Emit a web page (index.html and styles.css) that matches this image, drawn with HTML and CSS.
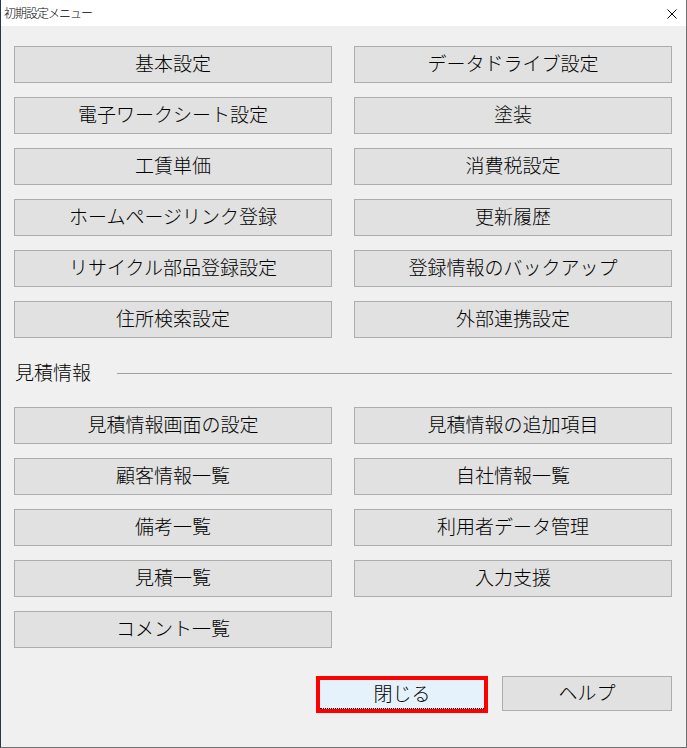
FILE: index.html
```html
<!DOCTYPE html>
<html lang="ja">
<head>
    <meta charset="UTF-8">
    <title>初期設定メニュー</title>
    <link rel="stylesheet" href="styles.css">
</head>
<body>

<div class="window">
    <div class="titlebar">
        <span class="title">初期設定メニュー</span>
        <svg class="close" width="10" height="10" viewBox="0 0 10 10">
            <path d="M0.5 0.5 L9.5 9.5 M9.5 0.5 L0.5 9.5" stroke="#000" stroke-width="1"/>
        </svg>
    </div>

    <div class="content">
        <div class="grid">
            <button>基本設定</button>
            <button>データドライブ設定</button>
            <button>電子ワークシート設定</button>
            <button>塗装</button>
            <button>工賃単価</button>
            <button>消費税設定</button>
            <button>ホームページリンク登録</button>
            <button>更新履歴</button>
            <button>リサイクル部品登録設定</button>
            <button>登録情報のバックアップ</button>
            <button>住所検索設定</button>
            <button>外部連携設定</button>
        </div>

        <div class="section">
            <span class="section-label">見積情報</span>
            <span class="section-line"></span>
        </div>

        <div class="grid">
            <button>見積情報画面の設定</button>
            <button>見積情報の追加項目</button>
            <button>顧客情報一覧</button>
            <button>自社情報一覧</button>
            <button>備考一覧</button>
            <button>利用者データ管理</button>
            <button>見積一覧</button>
            <button>入力支援</button>
            <button>コメント一覧</button>
        </div>

        <div class="footer">
            <button class="btn-close">閉じる</button>
            <button class="btn-help">ヘルプ</button>
        </div>
    </div>
</div>

</body>
</html>
```

FILE: styles.css
```css
body {
    margin: 0;
    font-family: "Noto Sans CJK JP", "Noto Sans", sans-serif;
    font-weight: 300;
    background-color: #f0f0f0;
    color: #000;
}
.window {
    width: 687px;
    height: 748px;
    box-sizing: border-box;
    border-left: 1px solid #27364a;
    border-right: 1px solid #707070;
    border-bottom: 1px solid #707070;
    background: #f0f0f0;
}
.titlebar {
    height: 26px;
    background: #fff;
    display: flex;
    align-items: center;
    justify-content: space-between;
    padding: 0 9px 0 3px;
}
.title {
    font-size: 12px;
    letter-spacing: -1px;
    line-height: 1;
}
.close {
    margin-top: 1px;
}
.content {
    padding: 20px 14px 0 13px;
}
.grid {
    display: grid;
    grid-template-columns: 318px 318px;
    column-gap: 22px;
    row-gap: 14px;
}
button {
    font-family: inherit;
    font-weight: 300;
    font-size: 19px;
    color: #000;
    height: 37px;
    padding: 0 0 4px;
    background: #e1e1e1;
    border: 1px solid #adadad;
    line-height: 1;
}
.section {
    display: flex;
    align-items: center;
    height: 24px;
    margin: 23px 0 22px;
}
.section-label {
    font-size: 19px;
    line-height: 1;
    padding: 0 0 3px 1px;
}
.section-line {
    flex: 1;
    height: 1px;
    background: #a0a0a0;
    margin-left: 26px;
}
.footer {
    display: flex;
    justify-content: flex-end;
    gap: 14px;
    margin-top: 28px;
}
.btn-close {
    width: 172px;
    border: 4px solid #ff0000;
    background: #e5f1fb;
    position: relative;
}
.btn-close::after {
    content: "";
    position: absolute;
    left: 0;
    right: 0;
    bottom: 0;
    border-top: 1px dotted #000;
}
.btn-help {
    width: 170px;
    height: 35px;
}
```
